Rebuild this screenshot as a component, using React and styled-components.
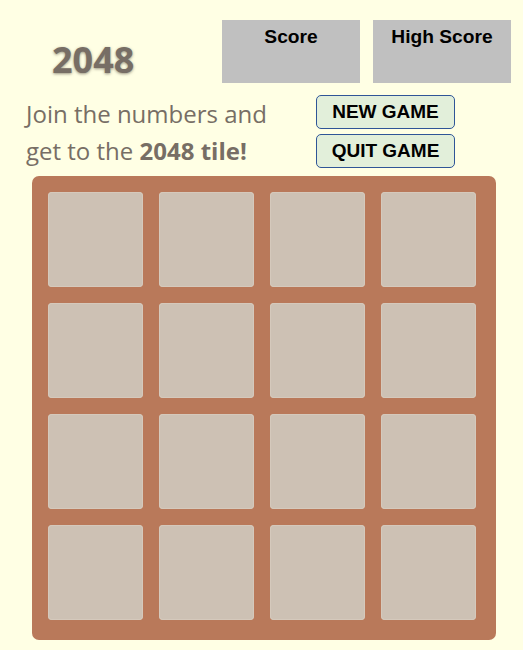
import React from 'react'
import styled, { createGlobalStyle } from 'styled-components'

const Global = createGlobalStyle`
  body {
    margin: 0;
    background: #ffffe4;
  }
`

const Page = styled.div`
  min-height: 650px;
  background: #ffffe4;
  font-family: "Open Sans", "DejaVu Sans", sans-serif;
  color: #776e65;
`

const TopRow = styled.div`
  display: flex;
  padding-top: 20px;
`

const Title = styled.h1`
  width: 170px;
  margin: 15px 0 0 52px;
  font-size: 36px;
  font-weight: 700;
  line-height: normal;
  color: #776e65;
  text-shadow: 0 1px 3px rgba(70, 60, 50, 0.55);
`

const Scores = styled.div`
  display: flex;
  gap: 13px;
`

const ScoreBox = styled.div`
  width: 138px;
  height: 63px;
  box-sizing: border-box;
  padding-top: 6px;
  background: #c0c0c0;
  text-align: center;
  font-family: "Liberation Sans", Arial, sans-serif;
  font-weight: 700;
  font-size: 19.2px;
  color: #000;
`

const SecondRow = styled.div`
  display: flex;
  margin-top: 11px;
`

const Intro = styled.p`
  flex: 0 0 316px;
  box-sizing: border-box;
  margin: 0;
  padding: 0 26px;
  font-size: 24px;
  line-height: 37px;
  b {
    font-weight: 700;
  }
`

const Buttons = styled.div`
  display: flex;
  flex-direction: column;
  gap: 5px;
`

const Button = styled.button`
  width: 139px;
  height: 34px;
  padding: 0;
  background: #e2efda;
  border: 1px solid #2f5597;
  border-radius: 5px;
  font-family: "Liberation Sans", Arial, sans-serif;
  font-weight: 700;
  font-size: 19px;
  color: #000;
`

const Board = styled.div`
  display: grid;
  grid-template-columns: repeat(4, 95px);
  grid-template-rows: repeat(4, 95px);
  gap: 16px;
  width: 464px;
  height: 464px;
  box-sizing: border-box;
  padding: 16px;
  margin: 7px 0 0 32px;
  background: #b9795a;
  border-radius: 7px;
`

const Tile = styled.div`
  background: #cdc1b4;
  border-radius: 4px;
  box-shadow: inset 0 0 0 1px rgba(214, 202, 188, 0.9);
`

export default function App() {
  const tiles = Array.from({ length: 16 })
  return (
    <Page>
      <Global />
      <TopRow>
        <Title>2048</Title>
        <Scores>
          <ScoreBox>Score</ScoreBox>
          <ScoreBox>High Score</ScoreBox>
        </Scores>
      </TopRow>
      <SecondRow>
        <Intro>
          Join the numbers and get to the <b>2048 tile!</b>
        </Intro>
        <Buttons>
          <Button>NEW GAME</Button>
          <Button>QUIT GAME</Button>
        </Buttons>
      </SecondRow>
      <Board>
        {tiles.map((_, i) => (
          <Tile key={i} />
        ))}
      </Board>
    </Page>
  )
}
